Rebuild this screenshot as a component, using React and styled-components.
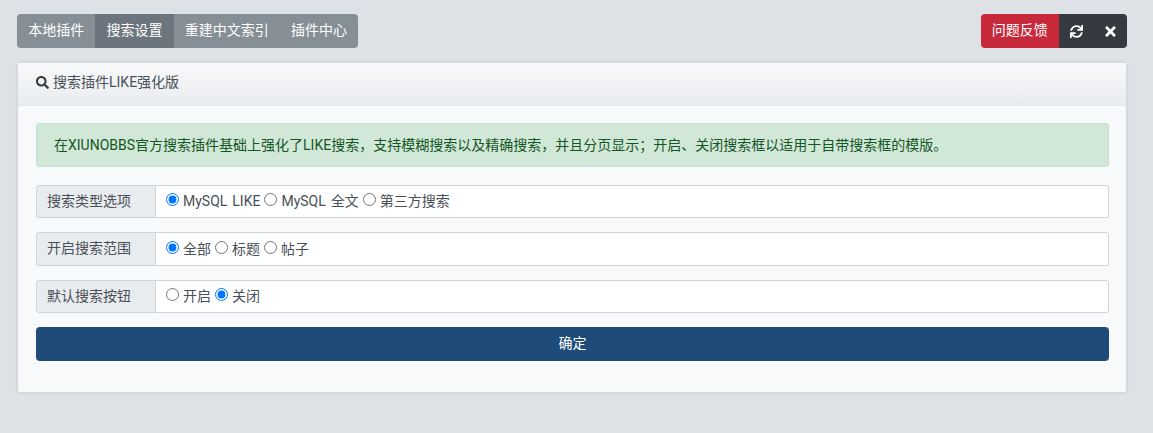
import React from 'react';
import styled, { createGlobalStyle } from 'styled-components';
import { FaSearch, FaSync, FaTimes } from 'react-icons/fa';

const GlobalStyle = createGlobalStyle`
  html, body {
    margin: 0;
    padding: 0;
    background: #dee2e6;
  }
  body {
    font-family: Roboto, "Noto Sans CJK SC", sans-serif;
    font-size: 14px;
    line-height: 21px;
    color: #495057;
  }
  * {
    box-sizing: border-box;
  }
`;

const searchTypes = [
  {
    label: '搜索类型选项',
    name: 'type',
    checked: 0,
    options: ['MySQL LIKE', 'MySQL 全文', '第三方搜索'],
  },
  {
    label: '开启搜索范围',
    name: 'range',
    checked: 0,
    options: ['全部', '标题', '帖子'],
  },
  {
    label: '默认搜索按钮',
    name: 'button',
    checked: 1,
    options: ['开启', '关闭'],
  },
];

const App = () => {
  return (
    <Page>
      <GlobalStyle />
      <Toolbar>
        <ButtonGroup>
          <GroupButton>本地插件</GroupButton>
          <GroupButton $active>搜索设置</GroupButton>
          <GroupButton>重建中文索引</GroupButton>
          <GroupButton>插件中心</GroupButton>
        </ButtonGroup>
        <ButtonGroup>
          <GroupButton $color="#c82a3b">问题反馈</GroupButton>
          <GroupButton $color="#343a40" $icon><FaSync size={13} /></GroupButton>
          <GroupButton $color="#343a40" $icon><FaTimes size={15} /></GroupButton>
        </ButtonGroup>
      </Toolbar>

      <Card>
        <CardHeader>
          <FaSearch size={13} color="#343a40" />
          <span>搜索插件LIKE强化版</span>
        </CardHeader>
        <CardBody>
          <Alert>在XIUNOBBS官方搜索插件基础上强化了LIKE搜索，支持模糊搜索以及精确搜索，并且分页显示；开启、关闭搜索框以适用于自带搜索框的模版。</Alert>
          {searchTypes.map((row) => (
            <InputGroup key={row.name}>
              <InputLabel>{row.label}</InputLabel>
              <InputField>
                {row.options.map((opt, i) => (
                  <RadioLabel key={opt}>
                    <Radio type="radio" name={row.name} defaultChecked={i === row.checked} />
                    {opt}
                  </RadioLabel>
                ))}
              </InputField>
            </InputGroup>
          ))}
          <SubmitButton>确定</SubmitButton>
        </CardBody>
      </Card>
    </Page>
  );
};

export default App;

const Page = styled.div`
  padding: 14px 26px 40px 17px;
`;

const Toolbar = styled.div`
  display: flex;
  justify-content: space-between;
  margin-bottom: 15px;
`;

const ButtonGroup = styled.div`
  display: flex;
  height: 34px;
  border-radius: 4px;
  overflow: hidden;
`;

const GroupButton = styled.button`
  display: flex;
  align-items: center;
  justify-content: center;
  height: 34px;
  width: ${(p) => (p.$icon ? '34px' : 'auto')};
  padding: ${(p) => (p.$icon ? '0' : '0 11.15px 2px')};
  border: none;
  font: inherit;
  color: #fff;
  cursor: pointer;
  background: ${(p) => p.$color || (p.$active ? '#6c757d' : '#868e96')};
`;

const Card = styled.div`
  margin: 0 1px;
  background: #f8f9fa;
  border-radius: 2px;
  box-shadow: 0 0 4px rgba(0, 0, 0, 0.12);
`;

const CardHeader = styled.div`
  display: flex;
  align-items: center;
  gap: 4px;
  height: 43px;
  padding: 0 18px 3px;
  color: #495057;
  background: linear-gradient(#f8f9fa, #e9ecef);
  border-bottom: 1px solid #e3e6ea;
`;

const CardBody = styled.div`
  padding: 17px 17px 31px 18px;
`;

const Alert = styled.div`
  height: 44px;
  padding: 0 17px;
  display: flex;
  align-items: center;
  margin-bottom: 17.8px;
  color: #155724;
  background: #d1e7d8;
  border: 1px solid #c3e0cc;
  border-radius: 3px;
`;

const InputGroup = styled.div`
  display: flex;
  height: 33.5px;
  margin-bottom: 14px;
`;

const InputLabel = styled.div`
  display: flex;
  align-items: center;
  width: 120px;
  padding: 0 10px 1px;
  color: #495057;
  background: #e9ecef;
  border: 1px solid #ced4da;
  border-radius: 3px 0 0 3px;
`;

const InputField = styled.div`
  flex: 1;
  display: flex;
  align-items: center;
  gap: 4px;
  padding: 0 10px;
  word-spacing: 1.5px;
  background: #fff;
  border: 1px solid #ced4da;
  border-left: none;
  border-radius: 0 3px 3px 0;
`;

const RadioLabel = styled.label`
  display: flex;
  align-items: center;
`;

const Radio = styled.input`
  width: 13px;
  height: 13px;
  margin: 0 4px 4px 0;
`;

const SubmitButton = styled.button`
  display: block;
  width: 100%;
  height: 34px;
  padding: 0 0 2px;
  border: none;
  border-radius: 4px;
  font: inherit;
  color: #fff;
  cursor: pointer;
  background: #1f4b78;
`;
